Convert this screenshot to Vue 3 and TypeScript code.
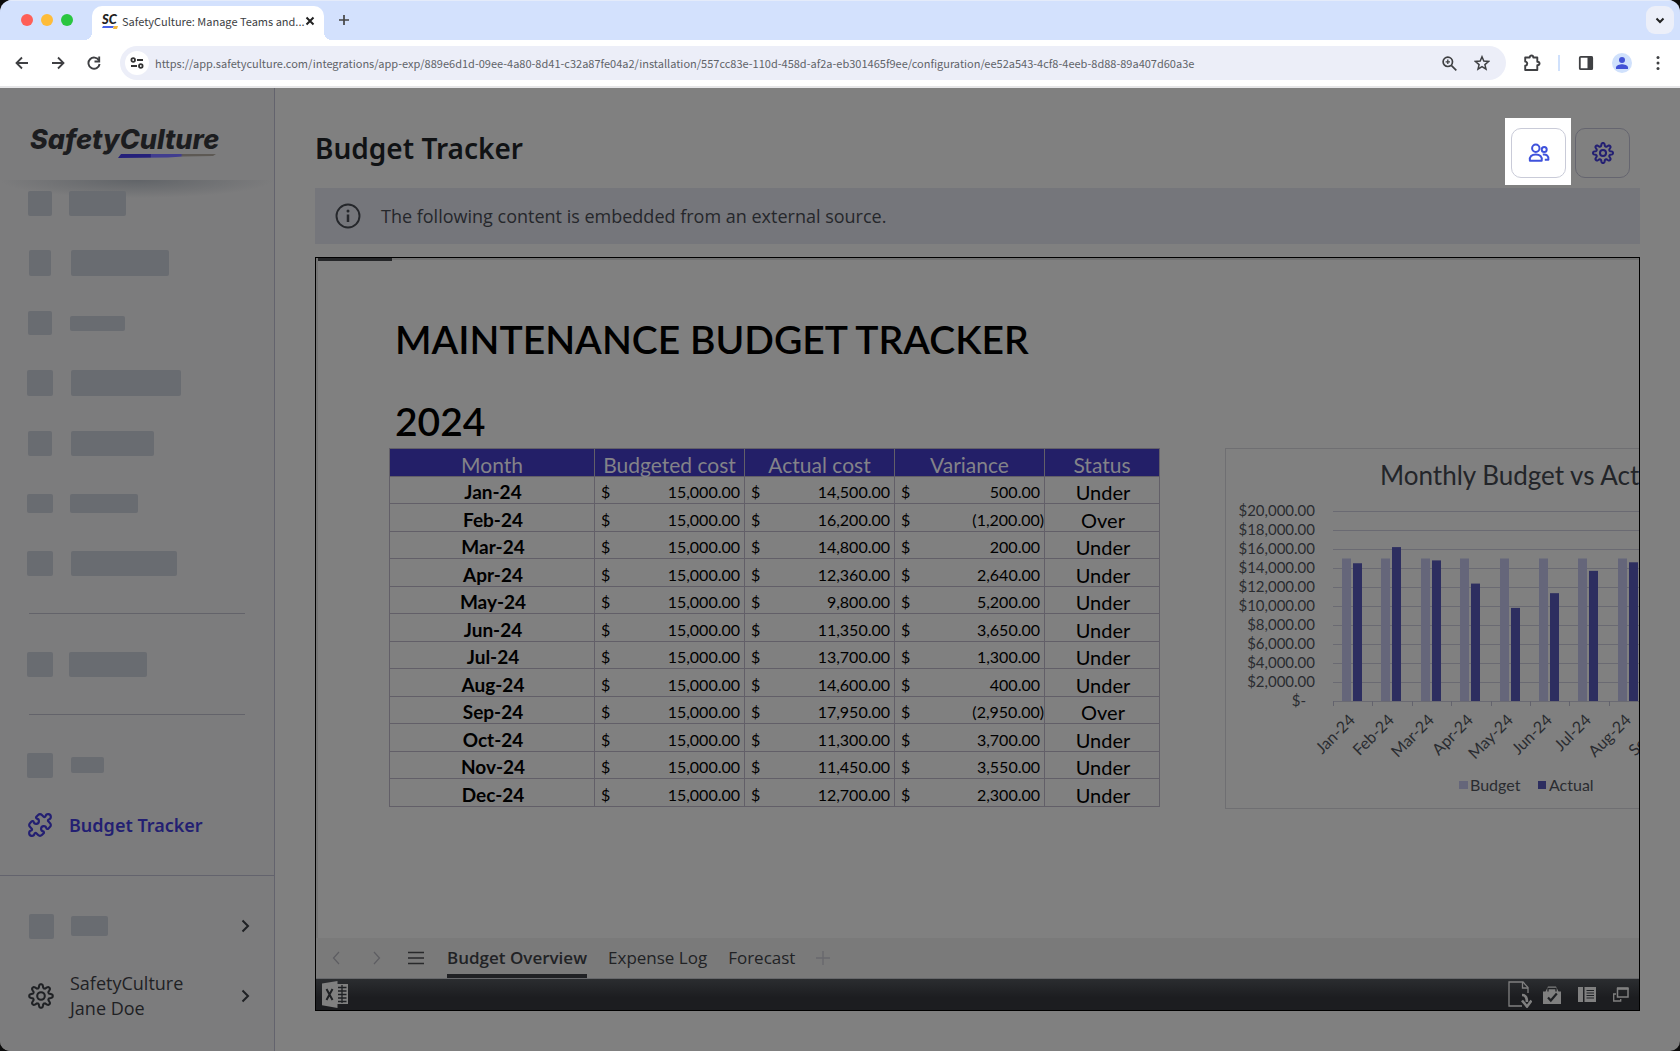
<script setup lang="ts">
interface Skeleton { iw: number; ih: number; w: number; h: number; dx: number }
interface Row { month: string; actual: number }

const topItems: Skeleton[] = [
  { iw: 24, ih: 25, w: 57, h: 25, dx: 0 },
  { iw: 22, ih: 26, w: 98, h: 26, dx: 2 },
  { iw: 24, ih: 24, w: 55, h: 15, dx: 1 },
  { iw: 26, ih: 26, w: 110, h: 26, dx: 2 },
  { iw: 24, ih: 25, w: 83, h: 25, dx: 2 },
  { iw: 26, ih: 19, w: 68, h: 19, dx: 1 },
  { iw: 26, ih: 25, w: 106, h: 25, dx: 2 },
]
const middleItems: Skeleton[] = [{ iw: 26, ih: 25, w: 78, h: 25, dx: 0 }]
const lowerItems: Skeleton[] = [{ iw: 26, ih: 25, w: 33, h: 16, dx: 2 }]
const footItem: Skeleton = { iw: 25, ih: 25, w: 37, h: 20, dx: 1 }

const px = (n: number) => `${n}px`
const iconStyle = (s: Skeleton) => ({ width: px(s.iw), height: px(s.ih) })
const barStyle = (s: Skeleton) => ({ width: px(s.w), height: px(s.h), marginLeft: px(s.dx) })

const BUDGET = 15000
const rows: Row[] = [
  { month: 'Jan-24', actual: 14500 },
  { month: 'Feb-24', actual: 16200 },
  { month: 'Mar-24', actual: 14800 },
  { month: 'Apr-24', actual: 12360 },
  { month: 'May-24', actual: 9800 },
  { month: 'Jun-24', actual: 11350 },
  { month: 'Jul-24', actual: 13700 },
  { month: 'Aug-24', actual: 14600 },
  { month: 'Sep-24', actual: 17950 },
  { month: 'Oct-24', actual: 11300 },
  { month: 'Nov-24', actual: 11450 },
  { month: 'Dec-24', actual: 12700 },
]
const money = (n: number) =>
  Math.abs(n).toLocaleString('en-US', { minimumFractionDigits: 2, maximumFractionDigits: 2 })
const variance = (r: Row) => BUDGET - r.actual

const axis = Array.from({ length: 11 }, (_, i) => 20000 - i * 2000)
const yOf = (v: number) => 252 - (v / 20000) * 190
const xOf = (i: number) => 107 + Math.round(i * 39.4)

// Eight-lobed cog outline around the centre of a 24 unit box
const cog = (() => {
  const pts: string[] = []
  for (let i = 0; i < 128; i++) {
    const t = (i / 128) * Math.PI * 2
    const c = Math.cos(8 * t)
    const r = 9.2 + 1.8 * Math.tanh(1.6 * c)
    pts.push(`${(12 + r * Math.sin(t)).toFixed(2)} ${(12 - r * Math.cos(t)).toFixed(2)}`)
  }
  return `M${pts.join('L')}Z`
})()
</script>

<template>
  <div class="window">
    <div class="tabstrip">
      <div class="lights"><i class="red"></i><i class="amber"></i><i class="green"></i></div>
      <div class="tab">
        <span class="favicon">SC<svg viewBox="0 0 17 3" width="17" height="3"><path d="M1 0h11l-1 2H0z" fill="#4a63e8" /><path d="M12 0h4l-1 3h-4z" fill="#f5b83d" /></svg></span>
        <span class="tab-title">SafetyCulture: Manage Teams and...</span>
        <button class="plain" aria-label="Close tab"><svg width="10" height="10" viewBox="0 0 10 10"><path d="M1.500 1.500l7 7M8.500 1.500l-7 7" stroke="#222" stroke-width="2" /></svg></button>
      </div>
      <button class="plain newtab" aria-label="New tab"><svg width="12" height="12" viewBox="0 0 12 12"><path d="M6 1v10M1 6h10" stroke="#444" stroke-width="1.700" /></svg></button>
      <button class="plain tabmenu" aria-label="Search tabs"><svg width="10" height="7" viewBox="0 0 10 7"><path d="M1.500 1.500L5 5l3.500-3.500" fill="none" stroke="#222" stroke-width="2" /></svg></button>
    </div>

    <div class="toolbar">
      <button class="plain nav" aria-label="Back"><svg width="14" height="14" viewBox="0 0 14 14"><path d="M13 7H2M7 1.500L1.500 7 7 12.500" fill="none" stroke="#3f4043" stroke-width="1.800" /></svg></button>
      <button class="plain nav" aria-label="Forward"><svg width="14" height="14" viewBox="0 0 14 14"><path d="M1 7h11M7 1.500L12.500 7 7 12.500" fill="none" stroke="#3f4043" stroke-width="1.800" /></svg></button>
      <button class="plain nav" aria-label="Reload"><svg width="14" height="14" viewBox="0 0 14 14"><path d="M12 4.500A5.600 5.600 0 1 0 12.600 8" fill="none" stroke="#3f4043" stroke-width="1.900" /><path d="M12.200.5v5H7.500" fill="none" stroke="#3f4043" stroke-width="1.900" /></svg></button>
      <div class="omnibox">
        <span class="tune"><svg width="14" height="12" viewBox="0 0 14 12" fill="none" stroke="#333" stroke-width="1.800"><circle cx="3.200" cy="3" r="1.800" /><path d="M7 3h6M1 9h6" /><circle cx="10.800" cy="9" r="1.800" /></svg></span>
        <input class="url" aria-label="Address" value="https://app.safetyculture.com/integrations/app-exp/889e6d1d-09ee-4a80-8d41-c32a87fe04a2/installation/557cc83e-110d-458d-af2a-eb301465f9ee/configuration/ee52a543-4cf8-4eeb-8d88-89a407d60a3e" />
        <svg width="15" height="15" viewBox="0 0 15 15" fill="none" stroke="#3f4043" stroke-width="1.700"><circle cx="5.800" cy="5.800" r="4.700" /><path d="M9.300 9.300l5 5" /><path d="M5.800 3.600V8M3.600 5.800H8" stroke-width="1.300" /></svg>
        <svg class="star" width="16" height="16" viewBox="0 0 16 16"><path d="M8 1.800l1.800 4.300 4.700.4-3.600 3.100 1.100 4.600L8 11.700l-4 2.500 1.100-4.600L1.500 6.500l4.700-.4z" fill="none" stroke="#3f4043" stroke-width="1.500" /></svg>
      </div>
      <div class="extras">
        <svg width="18" height="18" viewBox="0 0 18 18"><path d="M2.200 3.500h4.500C6.700 .8 10.300 .8 10.300 3.500h4v4.300c3 .3 3 3.300 0 3.500v4.700H2.200v-4.200c2.700-.6 2.700-3.800 0-4.200z" fill="none" stroke="#3f4043" stroke-width="1.900" stroke-linejoin="round" /></svg>
        <i class="divider"></i>
        <svg width="16" height="16" viewBox="0 0 16 16"><rect x="1.800" y="1.800" width="12.400" height="12.400" rx="1" fill="none" stroke="#3f4043" stroke-width="1.800" /><path d="M9.500 1.500h5v13h-5z" fill="#3f4043" /></svg>
        <svg class="avatar" width="20" height="20" viewBox="0 0 20 20"><circle cx="10" cy="10" r="10" fill="#d0e1fc" /><circle cx="10" cy="7" r="3" fill="#4252d6" /><path d="M4 16v-1.500c0-2.200 4-3.300 6-3.300s6 1.100 6 3.300V16z" fill="#4252d6" /></svg>
        <svg class="dots" width="4" height="16" viewBox="0 0 4 16" fill="#3f4043"><circle cx="2" cy="2.500" r="1.500" /><circle cx="2" cy="8" r="1.500" /><circle cx="2" cy="13.500" r="1.500" /></svg>
      </div>
    </div>

    <div class="body">
      <aside class="sidebar">
        <div class="brand">
          <span class="brand-name">SafetyCulture</span>
          <svg class="swoosh" width="98" height="5" viewBox="0 0 98 5"><defs><linearGradient id="sw"><stop offset="0" stop-color="#24207a" /><stop offset=".33" stop-color="#24207a" /><stop offset=".34" stop-color="#403d8f" /><stop offset=".64" stop-color="#403d8f" /><stop offset=".66" stop-color="#5d5954" /><stop offset="1" stop-color="#5d5954" /></linearGradient></defs><path d="M3 0h95l-3 2-30 .5-15 1L0 4z" fill="url(#sw)" /></svg>
          <div class="shade"></div>
        </div>
        <nav class="menu">
          <div v-for="(s, i) in topItems" :key="i" class="item"><span class="slot"><i class="bone" :style="iconStyle(s)"></i></span><i class="bone" :style="barStyle(s)"></i></div>
          <hr />
          <div v-for="(s, i) in middleItems" :key="i" class="item"><span class="slot"><i class="bone" :style="iconStyle(s)"></i></span><i class="bone" :style="barStyle(s)"></i></div>
          <hr />
          <div v-for="(s, i) in lowerItems" :key="i" class="item"><span class="slot"><i class="bone" :style="iconStyle(s)"></i></span><i class="bone" :style="barStyle(s)"></i></div>
          <a href="#" class="item active">
            <span class="slot"><svg width="26" height="26" viewBox="0 0 24 24" fill="none" stroke="currentColor" stroke-width="2" stroke-linejoin="round"><path d="M15.390 4.390a1 1 0 0 0 1.680-.474 2.500 2.500 0 1 1 3.014 3.015 1 1 0 0 0-.474 1.680l1.683 1.682a2.414 2.414 0 0 1 0 3.414L19.610 15.390a1 1 0 0 1-1.680-.474 2.500 2.500 0 1 0-3.014 3.015 1 1 0 0 1 .474 1.680l-1.683 1.682a2.414 2.414 0 0 1-3.414 0L8.610 19.610a1 1 0 0 0-1.680.474 2.500 2.500 0 1 1-3.014-3.015 1 1 0 0 0 .474-1.680l-1.683-1.682a2.414 2.414 0 0 1 0-3.414L4.390 8.610a1 1 0 0 1 1.680.474 2.500 2.500 0 1 0 3.014-3.015 1 1 0 0 1-.474-1.680l1.683-1.682a2.414 2.414 0 0 1 3.414 0z" /></svg></span>
            <span>Budget Tracker</span>
          </a>
        </nav>
        <div class="foot">
          <div class="item"><span class="slot"><i class="bone" :style="iconStyle(footItem)"></i></span><i class="bone" :style="barStyle(footItem)"></i>
            <svg class="chev" width="9" height="14" viewBox="0 0 9 14"><path d="M1.500 1.500L7 7l-5.500 5.500" fill="none" stroke="#1f2124" stroke-width="2" /></svg></div>
          <a href="#" class="item account">
            <span class="slot"><svg width="26" height="26" viewBox="0 0 24 24" fill="none" stroke="#1f2124" stroke-width="1.900"><path :d="cog" /><circle cx="12" cy="12" r="3.500" /></svg></span>
            <span>SafetyCulture<br />Jane Doe</span>
            <svg class="chev" width="9" height="14" viewBox="0 0 9 14"><path d="M1.500 1.500L7 7l-5.500 5.500" fill="none" stroke="#1f2124" stroke-width="2" /></svg>
          </a>
        </div>
      </aside>

      <main class="main">
        <header class="head">
          <h1>Budget Tracker</h1>
          <div class="spot"><button class="square lit" aria-label="People">
            <svg width="22" height="20" viewBox="0 0 22 20" fill="none" stroke="#3f52dc" stroke-width="2" stroke-linejoin="round"><circle cx="7.800" cy="5.300" r="3.700" /><path d="M1.900 17.700c-.8-4 2-6.300 5.900-6.300s6.700 2.300 5.900 6.300z" /><circle cx="16.200" cy="6.500" r="2.500" /><path d="M14.800 11.500c3.600-.6 6.200 1.400 5.600 5.200h-3.600" /></svg>
          </button></div>
          <button class="square" aria-label="Settings">
            <svg width="22" height="22" viewBox="0 0 24 24" fill="none" stroke="#231f72" stroke-width="2.200"><path :d="cog" /><circle cx="12" cy="12" r="3.300" /></svg>
          </button>
        </header>
        <div class="banner">
          <svg width="26" height="26" viewBox="0 0 26 26"><circle cx="13" cy="13" r="11.500" fill="none" stroke="#25272b" stroke-width="1.900" /><path d="M13 11.500v7.500" stroke="#25272b" stroke-width="2.500" /><circle cx="13" cy="8" r="1.500" fill="#25272b" /></svg>
          <span>The following content is embedded from an external source.</span>
        </div>

        <section class="frame">
          <div class="sheet">
            <i class="corner"></i>
            <h2>MAINTENANCE BUDGET TRACKER</h2>
            <h2 class="year">2024</h2>
            <div class="cells">
              <table>
                <thead><tr><th class="c1">Month</th><th class="c2">Budgeted cost</th><th class="c2">Actual cost</th><th class="c2">Variance</th><th class="c3">Status</th></tr></thead>
                <tbody>
                  <tr v-for="r in rows" :key="r.month">
                    <th scope="row">{{ r.month }}</th>
                    <td><span class="money"><span>$</span><span>{{ money(BUDGET) }}</span></span></td>
                    <td><span class="money"><span>$</span><span>{{ money(r.actual) }}</span></span></td>
                    <td><span class="money" :class="{ neg: variance(r) < 0 }"><span>$</span><span>{{ variance(r) < 0 ? `(${money(variance(r))})` : money(variance(r)) }}</span></span></td>
                    <td class="status">{{ variance(r) < 0 ? 'Over' : 'Under' }}</td>
                  </tr>
                </tbody>
              </table>
              <div class="chart">
                <svg width="610" height="359" viewBox="0 0 610 359">
                  <text x="154" y="36" class="ctitle">Monthly Budget vs Actual</text>
                  <g v-for="v in axis" :key="v">
                    <path :d="`M107 ${Math.round(yOf(v))}.5H590`" stroke="#6a6a72" />
                    <text :x="v ? 89 : 80" :y="Math.round(yOf(v)) + 5" text-anchor="end" class="clabel">{{ v ? `$${money(v)}` : '$-' }}</text>
                  </g>
                  <g v-for="(r, i) in rows" :key="r.month">
                    <path :d="`M${xOf(i)}.5 252v5`" stroke="#63636d" />
                    <rect :x="xOf(i) + 9" :y="yOf(BUDGET)" width="9" :height="252 - yOf(BUDGET)" fill="#65667a" />
                    <rect :x="xOf(i) + 20" :y="yOf(r.actual)" width="9" :height="252 - yOf(r.actual)" fill="#2d2e60" />
                    <text :transform="`translate(${xOf(i) + 23} 272) rotate(-45)`" text-anchor="end" class="clegend">{{ r.month }}</text>
                  </g>
                  <rect x="233" y="332" width="9" height="8" fill="#65667a" /><text x="244" y="342" class="clegend">Budget</text>
                  <rect x="312" y="332" width="8" height="8" fill="#2d2e60" /><text x="323" y="342" class="clegend">Actual</text>
                </svg>
              </div>
            </div>
          </div>
          <div class="sheets">
            <button class="plain" aria-label="Previous sheet"><svg width="8" height="14" viewBox="0 0 8 14"><path d="M7 1L1.500 7 7 13" fill="none" stroke="#5d5d62" stroke-width="1.200" /></svg></button>
            <button class="plain step" aria-label="Next sheet"><svg width="8" height="14" viewBox="0 0 8 14"><path d="M1 1l5.500 6L1 13" fill="none" stroke="#5d5d62" stroke-width="1.200" /></svg></button>
            <button class="plain list" aria-label="All sheets"><svg width="16" height="14" viewBox="0 0 16 14"><path d="M0 1.500h16M0 7h16M0 12.500h16" stroke="#28292b" stroke-width="1.400" /></svg></button>
            <button class="sheet-tab on">Budget Overview</button>
            <button class="sheet-tab">Expense Log</button>
            <button class="sheet-tab">Forecast</button>
            <button class="plain" aria-label="New sheet"><svg width="14" height="14" viewBox="0 0 14 14"><path d="M7 0v14M0 7h14" stroke="#68686d" stroke-width="1.400" /></svg></button>
          </div>
          <div class="status-bar">
            <svg width="27" height="27" viewBox="0 0 27 27"><path d="M15 3h11v20H15z" fill="#808080" /><path d="M16 6.500h8.500M16 10h8.500M16 13.500h8.500M16 17h8.500M16 20.500h8.500M20 4v18" stroke="#1f2124" stroke-width="1.300" /><path d="M0 2.500L15.500 0v27L0 24.200z" fill="#808080" /><path d="M4.500 8l6 11M10.500 8l-6 11" stroke="#1f2124" stroke-width="2" /></svg>
            <div class="actions">
              <svg width="24" height="27" viewBox="0 0 24 27" fill="none" stroke="#808080" stroke-width="1.300"><path d="M14 25H1V1h14l5 5.500V12" /><path d="M14.500 1v6H20" /><path d="M14 14c4 0 5 3 5 7" stroke-width="2.600" /><path d="M14 19.500l5 6 4.500-6" stroke-width="2.600" /></svg>
              <svg class="bag" width="18" height="18" viewBox="0 0 18 18"><path d="M0 5.500h2.500L5 .5h8l2.500 5H18V18H0z" fill="#808080" /><path d="M5 5.500V2.500h8v3" fill="none" stroke="#1f2124" stroke-width="1.300" /><path d="M5 11.500l2.800 3 6-7" fill="none" stroke="#1f2124" stroke-width="2.200" /></svg>
              <svg width="18" height="15" viewBox="0 0 18 15"><path d="M0 0h5v15H0zM6.500 0H18v15H6.500z" fill="#808080" /><path d="M8.500 3.500H16M8.500 6H16M8.500 8.500H16M8.500 11H16" stroke="#1f2124" stroke-width="1.200" /></svg>
              <svg class="popout" width="16" height="15" viewBox="0 0 16 15" fill="none" stroke="#808080"><path d="M4.500 1.500h10.500v8.500H4.500z" stroke-width="1.500" /><path d="M4 1.500h11.500" stroke-width="2.500" /><path d="M3 7H.7v7h7V12" stroke-width="1.300" /></svg>
            </div>
          </div>
        </section>
      </main>
    </div>
  </div>
</template>

<style>
html, body { background: #0c0c0c; }
</style>

<style scoped>
* { box-sizing: border-box; }
.window {
  min-height: 100vh; display: flex; flex-direction: column; overflow: hidden;
  border-radius: 12px 12px 10px 10px; background: #808080;
  font-family: "Open Sans", sans-serif; color: #1f2124;
}
i { display: block; }
svg { display: block; flex: none; }
.plain { border: 0; padding: 0; background: none; display: flex; align-items: center; justify-content: center; }

.tabstrip { height: 40px; background: #d3e1fd; display: flex; align-items: flex-end; padding-right: 6px; border-top: 1px solid #e4ebfa; }
.lights { display: flex; gap: 8px; padding: 0 19px 14px 21px; }
.lights i { width: 12px; height: 12px; border-radius: 50%; }
.red { background: #fe5f57; }
.amber { background: #febc39; }
.green { background: #2ac640; }
.tab {
  height: 34px; width: 232px; background: #fff; border-radius: 10px 10px 0 0;
  display: flex; align-items: center; padding: 0 12px 5px 10px; position: relative;
}
.tab::before, .tab::after { content: ""; position: absolute; bottom: 0; width: 8px; height: 8px; }
.tab::before { right: 100%; background: radial-gradient(circle at 0 0, #fff0 8px, #fff 8px); }
.tab::after { left: 100%; background: radial-gradient(circle at 100% 0, #fff0 8px, #fff 8px); }
.favicon { font: italic 900 13px/13px Lato, sans-serif; color: #222; width: 17px; }
.tab-title { font: 11px/18px "Noto Sans CJK SC", sans-serif; color: #3c4043; margin-left: 3px; flex: 1; white-space: nowrap; }
.newtab { height: 12px; margin: 0 0 14px 14px; }
.tabmenu { margin: 0 0 6px auto; width: 28px; height: 28px; border-radius: 9px; background: #eceff9; }

.toolbar { height: 48px; background: #fff; border-bottom: 2px solid #e6e6e8; display: flex; align-items: center; padding: 0 20px 0 15px; }
.nav { width: 14px; height: 34px; margin-right: 22px; }
.nav:nth-child(3) { margin-right: 19px; }
.omnibox { flex: 1; height: 34px; border-radius: 17px; background: #eceef8; display: flex; align-items: center; padding: 0 16px 0 5px; }
.tune { width: 24px; height: 24px; border-radius: 50%; background: #fff; display: flex; align-items: center; justify-content: center; }
.url { flex: 1; border: 0; background: none; padding: 0; margin-left: 6px; font: 11px/18px "Noto Sans CJK SC", sans-serif; color: #5f6368; outline: 0; }
.star { margin-left: 17px; }
.extras { display: flex; align-items: center; }
.extras > svg:first-child { margin-left: 17px; }
.divider { width: 2px; height: 16px; background: #d0e1fc; margin: 0 18px 0 17px; }
.avatar { margin-left: 18px; }
.dots { margin-left: 24px; }

.body { flex: 1; display: flex; }
.sidebar { width: 275px; flex: none; background: #7c7c7d; border-right: 1px solid #63636d; display: flex; flex-direction: column; }
.brand { height: 85px; padding: 37px 0 0 30px; position: relative; }
.brand-name { display: block; font: italic 800 27px/29px Inter, sans-serif; color: #1c1d20; }
.swoosh { margin-left: 88px; }
.shade { position: absolute; left: 0; right: 0; top: 92px; height: 18px; background: radial-gradient(ellipse 50% 100% at 50% 0, #616468, #7c7c7d00); }
.menu { flex: 1; }
.item { height: 60px; display: flex; align-items: center; padding: 0 24px; color: #1f2124; text-decoration: none; position: relative; }
.slot { width: 32px; margin-right: 13px; display: flex; justify-content: center; }
.bone { background: #696c71; border-radius: 2px; }
.menu hr { border: 0; height: 1px; background: #63636a; margin: 20px 29px; }
.active { color: #231f72; font: 600 18px/24px "Noto Sans", sans-serif; }
.foot { border-top: 1px solid #63636d; padding: 20px 0 15px; }
.account { height: 80px; font-size: 18px; line-height: 25px; }
.foot .slot { width: 34px; margin-right: 12px; }
.chev { margin-left: auto; }

.main { flex: 1; min-width: 0; padding: 30px 40px 40px; display: flex; flex-direction: column; }
.head { display: flex; align-items: flex-start; padding-right: 10px; margin-bottom: 3px; }
h1 { margin: 9px auto 0 0; font: 600 28px/42px "Noto Sans", sans-serif; color: #101214; }
.spot { background: #fff; padding: 10px 5px 7px 6px; margin-right: 4px; }
.square { width: 55px; height: 50px; border: 1px solid #65656f; border-radius: 10px; background: none; padding: 0; display: flex; align-items: center; justify-content: center; margin-top: 10px; }
.lit { margin-top: 0; border-color: #c9cbd8; }
.banner { height: 56px; background: #75767b; display: flex; align-items: center; padding-left: 20px; gap: 20px; font-size: 18px; color: #25272b; }
.frame { flex: 1; margin-top: 13px; border: 1px solid #000; display: flex; flex-direction: column; overflow: hidden; }
.sheet { flex: 1; padding: 53px 0 0 71px; border-top: 2px solid #717171; border-left: 2px solid #747474; font-family: Lato, sans-serif; color: #000; position: relative; }
.corner { position: absolute; left: 0; top: -2px; width: 74px; height: 3px; background: #252628; }
h2 { margin: 0 0 0 6px; font-size: 39px; line-height: 52px; font-weight: 600; white-space: nowrap; }
.year { margin: 30px 0 1px 6px; }
.cells { display: flex; align-items: flex-start; overflow: hidden; }
table { border-collapse: collapse; table-layout: fixed; width: 770px; flex: none; line-height: 20px; font-size: 18px; }
th, td { border: 1px solid #625f68; padding: 4px 4px 0 6px; height: 27px; }
tbody tr:nth-child(even) th, tbody tr:nth-child(even) td { height: 28px; }
thead th { background: #231f68; color: #838389; font-weight: 400; font-size: 21px; padding: 4px 0 0; height: 28px; }
tbody th { font-weight: 700; font-size: 19px; }
.c1 { width: 205px; }
.c2 { width: 150px; }
.c3 { width: 115px; }
.money { display: flex; justify-content: space-between; font-size: 16px; }
.neg { margin-right: -4px; }
.status { text-align: center; font-size: 20px; }
.chart { flex: none; margin-left: 65px; width: 612px; border: 1px solid #6f6f72; }
.ctitle { font-size: 26px; fill: #232529; }
.clabel { font-size: 15px; fill: #2a2c30; }
.clegend { font-size: 16px; fill: #2a2c30; }

.sheets { height: 41px; background: #7a7a7a; border-bottom: 1px solid #66676a; display: flex; align-items: center; padding-left: 16px; }
.step { margin-left: 33px; }
.list { margin: 0 23px 0 27px; }
.sheet-tab { height: 40px; border: 0; border-bottom: 4px solid transparent; border-top: 4px solid transparent; background: none; padding: 0; margin-right: 21px; font: 17px/24px "Open Sans", sans-serif; color: #212225; }
.on { font-weight: 600; border-bottom-color: #202124; }
.status-bar { height: 31px; background: linear-gradient(#2b2d30, #1c1d20 60%); display: flex; align-items: center; justify-content: space-between; padding: 0 10px 0 6px; }
.actions { display: flex; align-items: center; gap: 17px; }
.bag { margin-left: -6px; }
</style>
